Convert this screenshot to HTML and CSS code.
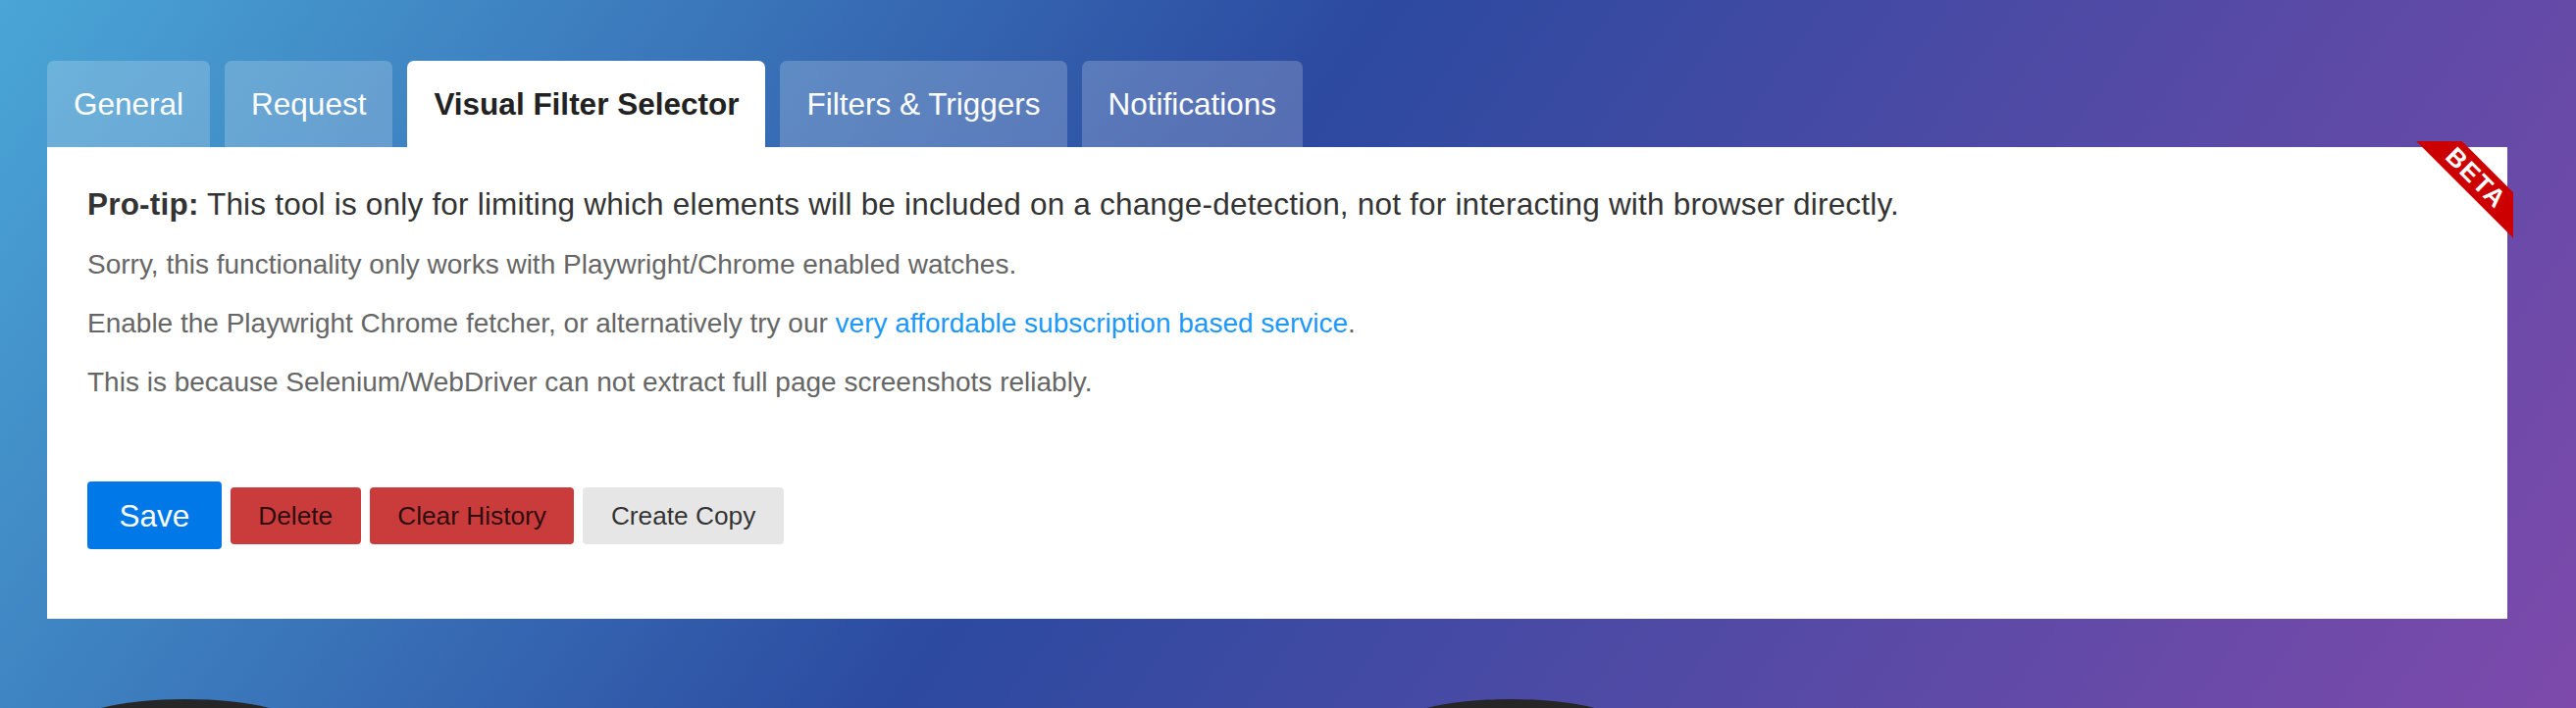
FILE: index.html
```html
<!DOCTYPE html>
<html lang="en">
<head>
    <meta charset="UTF-8">
    <meta name="viewport" content="width=device-width, initial-scale=1.0">
    <title>Edit watch - Visual Filter Selector</title>
    <link rel="stylesheet" href="styles.css">
</head>
<body>
    <div class="edit-form">
        <div class="tabs">
            <ul>
                <li><a href="#general">General</a></li>
                <li><a href="#request">Request</a></li>
                <li class="active"><a href="#visualselector">Visual Filter Selector</a></li>
                <li><a href="#filters-and-triggers">Filters &amp; Triggers</a></li>
                <li><a href="#notifications">Notifications</a></li>
            </ul>
        </div>

        <div class="box-wrap">
            <!-- beta ribbon -->
            <div class="ribbon"><span>BETA</span></div>

            <p class="pro-tip"><strong>Pro-tip:</strong> This tool is only for limiting which elements will be included on a change-detection, not for interacting with browser directly.</p>
            <p class="note">Sorry, this functionality only works with Playwright/Chrome enabled watches.</p>
            <p class="note">Enable the Playwright Chrome fetcher, or alternatively try our <a href="#">very affordable subscription based service</a>.</p>
            <p class="note">This is because Selenium/WebDriver can not extract full page screenshots reliably.</p>

            <div class="actions">
                <button type="submit" class="pure-button button-primary">Save</button>
                <a href="#" class="pure-button button-error">Delete</a>
                <a href="#" class="pure-button button-error">Clear History</a>
                <a href="#" class="pure-button">Create Copy</a>
            </div>
        </div>

        <div class="feet">
            <span class="blob"></span>
            <span class="blob blob-right"></span>
        </div>
    </div>
</body>
</html>
```

FILE: styles.css
```css
html { height: 100%; }
body {
  margin: 0;
  height: 100%;
  overflow: hidden;
  font-family: "Liberation Sans", Helvetica, Arial, sans-serif;
  background: linear-gradient(125deg, #4aa6d6 0%, #2c4aa0 45%, #7d4aab 100%);
}
.edit-form { width: 2508px; padding: 62px 0 0 48px; }

/* tabs */
.tabs ul { display: flex; gap: 15px; margin: 0; padding: 0; list-style: none; }
.tabs li { background: rgba(255, 255, 255, 0.2); border-radius: 7px 7px 0 0; }
.tabs li a { display: block; padding: 0 27px; line-height: 88px; font-size: 31.5px; color: #fff; text-decoration: none; }
.tabs li.active { background: #fff; }
.tabs li.active a { color: #222; font-weight: bold; }

/* panel */
.box-wrap { position: relative; background: #fff; padding: 41px 41px 71px 41px; }
.pro-tip { margin: 0; font-size: 31.5px; line-height: 35px; color: #333; letter-spacing: 0.2px; }
.note { margin: 28px 0 0; font-size: 28px; line-height: 32px; color: #666; }
.note a { color: #1b98f8; text-decoration: none; }

.ribbon { position: absolute; top: -6px; right: -6px; width: 100px; height: 100px; overflow: hidden; }
.ribbon span {
  position: absolute; left: -18px; top: 21px; width: 160px; height: 33px; line-height: 33px;
  background: #cc0000; color: #fff; text-align: center; font-weight: bold; font-size: 26px; letter-spacing: 1.5px;
  transform: rotate(45deg);
}

/* buttons */
.actions { display: flex; align-items: center; gap: 9px; margin-top: 85px; }
.pure-button {
  font-family: inherit; font-size: 26.25px; line-height: 30px; padding: 14px 28.5px;
  border: none; border-radius: 4px; background: #e6e6e6; color: rgba(0, 0, 0, 0.8);
  text-decoration: none; cursor: pointer;
}
.button-primary { background: #0078e7; color: #fff; font-size: 31.5px; line-height: 36px; padding: 16.5px 32.5px; }
.button-error { background: #ca3c3c; }

/* dark shapes peeking in at the bottom */
.feet { display: flex; height: 9px; overflow: hidden; margin-top: 82px; padding-left: 21px; }
.blob { flex: none; width: 240px; height: 60px; border-radius: 50%; background: #262626; }
.blob-right { margin-left: 1111px; }
```
